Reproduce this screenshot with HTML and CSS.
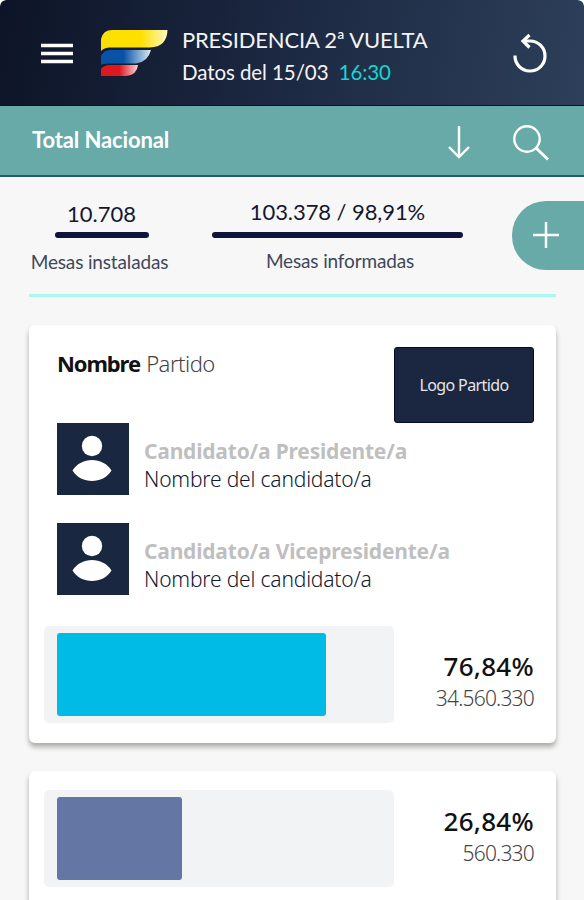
FILE: index.html
```html
<!DOCTYPE html>
<html lang="es">
<head>
<meta charset="utf-8">
<title>Presidencia 2ª Vuelta</title>
<link rel="stylesheet" href="styles.css">
</head>
<body>
<header class="topbar">
  <svg class="menu" width="34" height="24" viewBox="0 0 34 24"><path d="M1 3.500h32M1 11.500h32M1 19.500h32" stroke="#fff" stroke-width="3.600"/></svg>
  <svg class="flag" width="68" height="48" viewBox="0 0 68 48">
    <defs>
      <linearGradient id="y"><stop offset=".6" stop-color="#fee000"/><stop offset="1" stop-color="#fff8c0"/></linearGradient>
      <linearGradient id="b"><stop offset=".45" stop-color="#0952a5"/><stop offset="1" stop-color="#dceaf6"/></linearGradient>
      <linearGradient id="r"><stop offset=".5" stop-color="#dc1820"/><stop offset="1" stop-color="#fbd5d2"/></linearGradient>
    </defs>
    <path fill="url(#y)" d="M1 22V10Q3 1 12 1H67.500Q67 18 50 18.500H10Q4 18.500 1 22Z"/>
    <path fill="url(#b)" d="M1 36V27Q4 21 10 21H51Q48 33 36 34.500H8Q3 34.500 1 36Z"/>
    <path fill="url(#r)" d="M1 47V40Q4 36 10 36H38Q37 46 26 47Z"/>
  </svg>
  <div class="heading">
    <h1 class="title">PRESIDENCIA 2ª VUELTA</h1>
    <p class="date">Datos del 15/03 <span class="time">16:30</span></p>
  </div>
  <svg class="reload" width="36" height="42" viewBox="0 0 36 42" fill="none" stroke="#fff" stroke-width="3.200"><path d="M3 22.500A15 15 0 1 0 18 8H11"/><path d="M17.500 2L11 8L17.500 14.500"/></svg>
</header>
<nav class="scope">
  <h2 class="scope-title">Total Nacional</h2>
  <svg class="arrow" width="24" height="36" viewBox="0 0 24 36" fill="none" stroke="#fff" stroke-width="2.400"><path d="M12 2V33M2 23L12 33L22 23"/></svg>
  <svg class="search" width="38" height="38" viewBox="0 0 38 38" fill="none" stroke="#fff" stroke-width="2.400"><circle cx="15" cy="15" r="12.700"/><path d="M24 24L36 35.500" stroke-width="2.800"/></svg>
</nav>
<main>
  <section class="stats">
    <div class="stat stat-installed"><strong class="value">10.708</strong><i class="rule"></i><span class="label">Mesas instaladas</span></div>
    <div class="stat stat-reported"><strong class="value">103.378 / 98,91%</strong><i class="rule"></i><span class="label">Mesas informadas</span></div>
    <div class="add"><svg width="28" height="28" viewBox="0 0 28 28" stroke="#fff" stroke-width="2.500"><path d="M14 1V27M1 14H27"/></svg></div>
  </section>
  <article class="card">
    <div class="card-head">
      <h3 class="party"><b>Nombre</b> <span>Partido</span></h3>
      <div class="logo">Logo Partido</div>
    </div>
    <div class="person">
      <svg class="avatar" width="72" height="72" viewBox="0 0 72 72"><rect width="72" height="72" fill="#1a2740"/><circle cx="35" cy="23" r="10.200" fill="#fff"/><path fill="#fff" d="M15.500 47.500C24 33.500 46 33.500 54.500 47.500C46 61.500 24 61.500 15.500 47.500Z"/></svg>
      <div class="person-text"><p class="role">Candidato/a Presidente/a</p><p class="name">Nombre del candidato/a</p></div>
    </div>
    <div class="person">
      <svg class="avatar" width="72" height="72" viewBox="0 0 72 72"><rect width="72" height="72" fill="#1a2740"/><circle cx="35" cy="23" r="10.200" fill="#fff"/><path fill="#fff" d="M15.500 47.500C24 33.500 46 33.500 54.500 47.500C46 61.500 24 61.500 15.500 47.500Z"/></svg>
      <div class="person-text"><p class="role">Candidato/a Vicepresidente/a</p><p class="name">Nombre del candidato/a</p></div>
    </div>
    <div class="result result-first">
      <div class="track"><div class="fill cyan"></div></div>
      <div class="score"><strong class="pct">76,84%</strong><span class="votes">34.560.330</span></div>
    </div>
  </article>
  <article class="card card-next">
    <div class="result">
      <div class="track"><div class="fill violet"></div></div>
      <div class="score"><strong class="pct">26,84%</strong><span class="votes">560.330</span></div>
    </div>
  </article>
</main>
</body>
</html>
```
FILE: styles.css
```css
* { box-sizing: border-box; }
html { background: #fff; }
body { margin: 0; height: 900px; overflow: hidden; background: #f7f7f7; font-family: Lato, "Liberation Sans", sans-serif; color: #14182f; border-radius: 6px 6px 0 0; }
h1, h2, h3, p { margin: 0; font-weight: 400; }
svg { display: block; flex: none; }

.topbar { display: flex; height: 106px; padding-left: 40px; border-radius: 6px 6px 0 0; border-bottom: 1px solid #080f29; background: linear-gradient(100deg, #0d1427 0%, #1b2740 45%, #2d3f5a 100%); color: #f4f4f4; }
.menu { margin-top: 42px; }
.flag { margin: 29px 0 0 26px; }
.heading { width: 330px; padding: 24px 0 0 14px; white-space: nowrap; }
.title { font-size: 22px; line-height: 32px; letter-spacing: -.2px; }
.date { font-size: 20.5px; line-height: 32px; letter-spacing: -.08px; }
.time { margin-left: 5px; color: #16d5d5; }
.reload { margin: 33px 0 0 14px; }

.scope { display: flex; height: 71px; padding-left: 32px; background: #67aaa8; border-bottom: 2px solid #235b66; color: #fff; }
.scope-title { width: 415px; font-size: 22px; line-height: 68px; font-weight: 700; letter-spacing: -.12px; }
.arrow { margin-top: 18px; }
.search { margin: 18px 0 0 41px; }

.stats { display: flex; height: 120px; margin: 0 28px 0 29px; border-bottom: 3px solid #a9f7ef; }
.stat { display: flex; flex-direction: column; align-items: center; white-space: nowrap; }
.stat-installed { width: 145px; padding-top: 23px; }
.stat-reported { width: 251px; margin-left: 38px; padding-top: 21px; }
.value { height: 32px; font-size: 22px; line-height: 28px; font-weight: 400; }
.stat-reported .value { height: 34px; letter-spacing: -.08px; }
.rule { width: 94px; height: 6px; border-radius: 3px; background: #10133a; }
.stat-reported .rule { width: 251px; }
.label { margin: 9px 4px 0 0; font-size: 19px; line-height: 30px; letter-spacing: -.15px; color: #40475b; }
.stat-reported .label { margin: 8px 0 0 5px; }
.add { display: flex; flex: none; width: 72px; height: 69px; margin: 24px -28px 0 49px; padding: 20px 0 0 20px; border-radius: 34px 0 0 34px; background: #67aaa8; }

.card { height: 418px; margin: 28px 28px 0 29px; padding: 22px 22px 0 28px; border-radius: 6px; background: #fff; box-shadow: 0 4px 5px rgba(60, 60, 50, .4); font-family: "Noto Sans", sans-serif; white-space: nowrap; }
.card-head { display: flex; justify-content: space-between; height: 76px; }
.party { font-size: 22px; line-height: 32px; letter-spacing: -.5px; color: #111; }
.party b { letter-spacing: -1.100px; margin-right: 1px; }
.party span { font-weight: 300; color: #444; }
.logo { width: 140px; height: 76px; border: 1px solid #050b2a; border-radius: 3px; background: #1b2740; color: #e5e5e5; font-size: 16px; line-height: 75px; letter-spacing: -.6px; text-align: center; }
.person { display: flex; height: 72px; margin-bottom: 28px; }
.person-text { padding: 15px 0 0 15px; }
.role { font-size: 21px; line-height: 27px; font-weight: 700; letter-spacing: -.2px; color: #bfbfbf; }
.name { font-size: 21px; line-height: 28px; font-weight: 300; letter-spacing: -.18px; color: #14182f; }
.result { display: flex; justify-content: space-between; margin-left: -13px; }
.result-first { padding-top: 3px; }
.track { width: 350px; height: 97px; padding: 7px 13px; border-radius: 5px; background: #f1f3f5; }
.fill { height: 83px; border-radius: 3px; }
.cyan { width: 268.5px; background: #00bbe6; }
.violet { width: 124.5px; background: #6376a4; }
.score { display: flex; flex-direction: column; align-items: flex-end; padding-top: 24px; }
.pct { font-size: 26px; line-height: 33px; font-weight: 500; letter-spacing: .3px; color: #111; }
.votes { font-size: 21px; line-height: 30px; font-weight: 300; letter-spacing: -.8px; color: #444; }
.card-next { height: 160px; padding-top: 19px; }
.card-next .score { padding-top: 15px; }
```
